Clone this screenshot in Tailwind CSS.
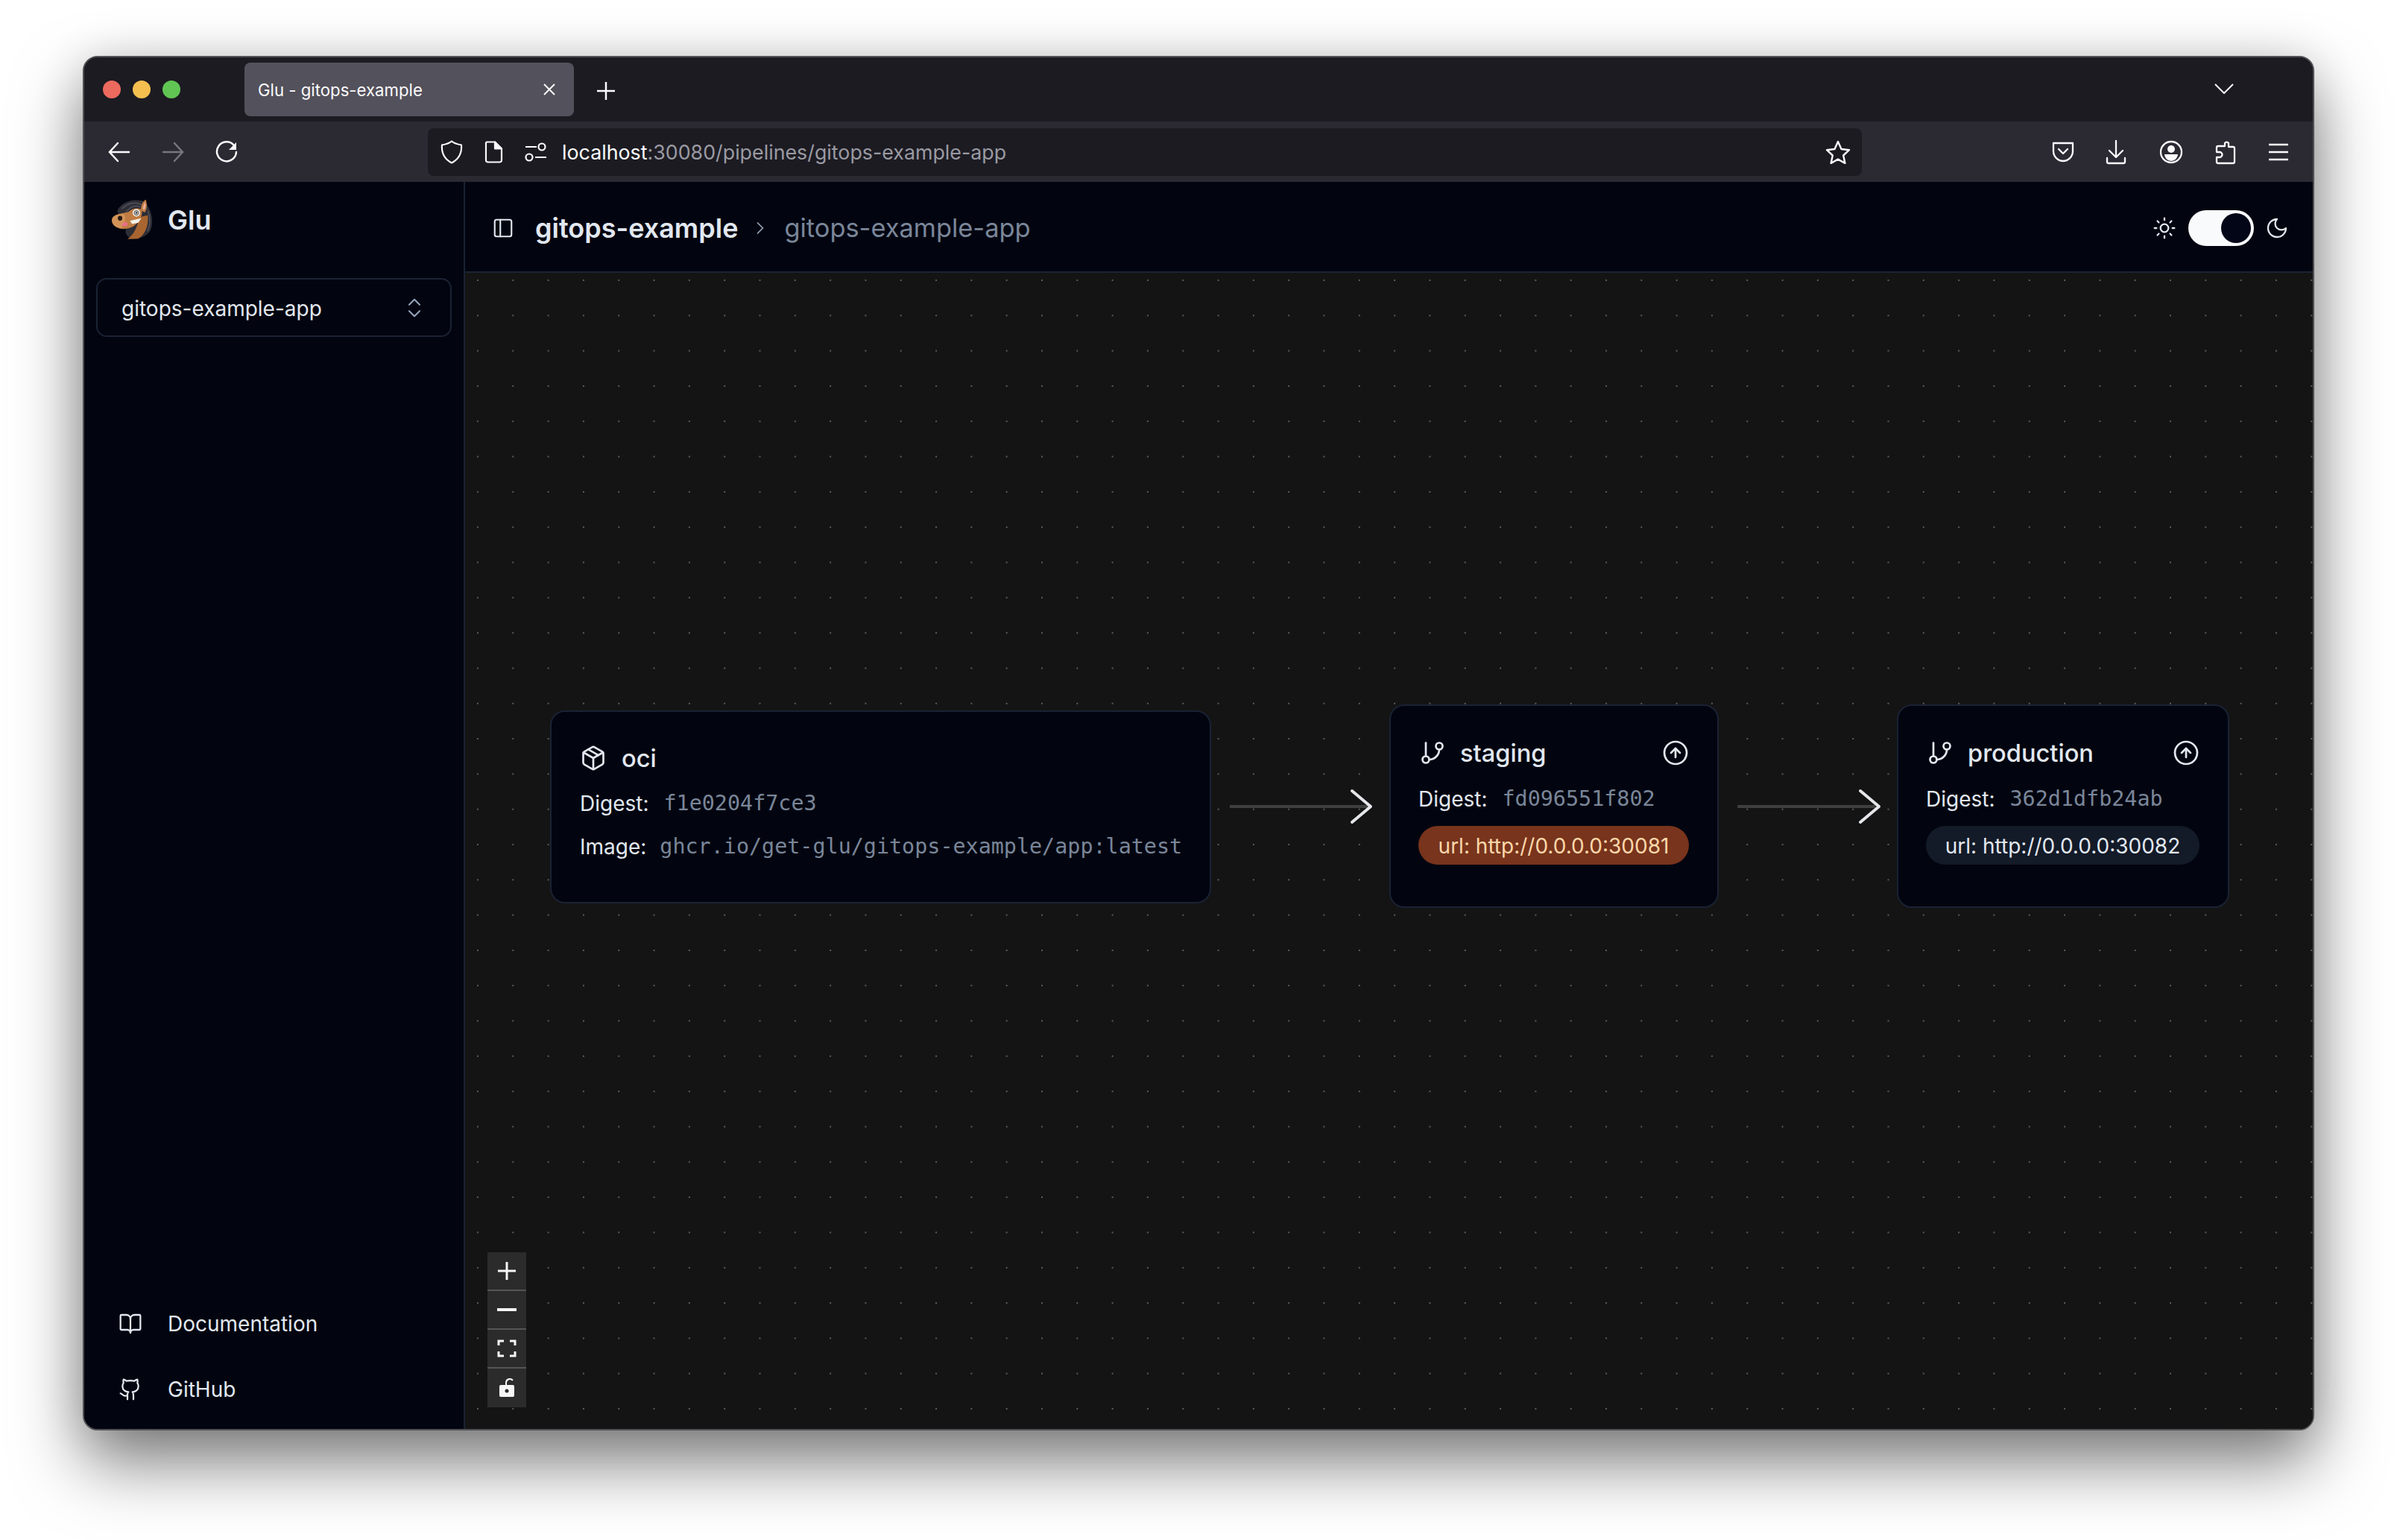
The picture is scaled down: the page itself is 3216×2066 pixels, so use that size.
<!DOCTYPE html>
<html lang="en">
<head>
    <meta charset="UTF-8">
    <title>Glu - gitops-example</title>
    <script src="https://cdn.jsdelivr.net/npm/@tailwindcss/browser@4"></script>
</head>
<body class="bg-white h-[2066px] w-[3216px] overflow-hidden pl-[111px] pt-[75px] font-['Inter',sans-serif]">
    <!-- Browser window -->
    <div class="w-[2994px] h-[1844px] flex flex-col border-2 border-[#505054] rounded-[20px] overflow-hidden bg-[#1c1b22] shadow-[0_44px_90px_rgba(0,0,0,0.5),0_0_60px_rgba(0,0,0,0.12)]">

        <!-- Tab strip -->
        <div class="h-[86px] shrink-0 flex items-start pl-[25px] bg-[#1c1b22]">
            <div class="flex gap-4 mt-[31px]">
                <span class="w-6 h-6 rounded-full bg-[#ec6a5e]"></span>
                <span class="w-6 h-6 rounded-full bg-[#f4bf4f]"></span>
                <span class="w-6 h-6 rounded-full bg-[#61c554]"></span>
            </div>
            <div class="ml-[86px] mt-[7px] w-[442px] h-[72px] rounded-lg bg-[#53515b] flex items-center pl-[18px] pr-[24px] justify-between">
                <span class="pt-[2px] text-[22.2px] text-[#fbfbfe]">Glu - gitops-example</span>
                <svg class="w-[18px] h-[18px]" viewBox="0 0 18 18" fill="none" stroke="#fbfbfe" stroke-width="2"><path d="M2 2l14 14M16 2L2 16"/></svg>
            </div>
            <svg class="ml-[30px] mt-[32px] w-[26px] h-[26px]" viewBox="0 0 26 26" fill="none" stroke="#fbfbfe" stroke-width="2.5"><path d="M13 1v24M1 13h24"/></svg>
            <svg class="ml-auto mr-[106px] mt-[35px] w-[26px] h-[14px]" viewBox="0 0 26 14" fill="none" stroke="#fbfbfe" stroke-width="2"><path d="M1 1l12 12L25 1"/></svg>
        </div>

        <!-- Toolbar -->
        <div class="h-[81px] shrink-0 flex items-center pl-[32px] bg-[#2b2a33] text-[#fbfbfe]">
            <svg class="w-[30px] h-[30px]" viewBox="0 0 30 30" fill="none" stroke="#fbfbfe" stroke-width="2.5" stroke-linecap="round"><path d="M28 15H2M13 3L2 15l11 12"/></svg>
            <svg class="ml-[42px] w-[30px] h-[30px]" viewBox="0 0 30 30" fill="none" stroke="#77767e" stroke-width="2.5" stroke-linecap="round"><path d="M2 15h26M17 3l11 12-11 12"/></svg>
            <svg class="ml-[42px] w-[30px] h-[30px]" viewBox="0 0 30 30" fill="none" stroke="#fbfbfe" stroke-width="2.5" stroke-linecap="round"><path d="M25 6A13 13 0 1 0 28 15"/><path d="M28 2v10H18z" fill="#fbfbfe" stroke="none"/></svg>

            <!-- Url bar -->
            <div class="ml-[255px] w-[1924px] h-16 rounded-lg bg-[#1c1b22] flex items-center pl-[17px] pr-[15px]">
                <svg class="w-[30px] h-[32px]" viewBox="0 0 30 32" fill="none" stroke="#fbfbfe" stroke-width="2.2" stroke-linejoin="round"><path d="M15 1.5c3 2.5 7 4 13 5 .8 10-3.5 19-13 24-9.5-5-13.800-14-13-24 6-1 10-2.500 13-5z"/></svg>
                <svg class="ml-[29px] w-[25px] h-[30px]" viewBox="0 0 25 30" fill="none" stroke="#fbfbfe" stroke-width="2.2" stroke-linejoin="round"><path d="M3 1.500h11l9 9V26a2.500 2.500 0 0 1-2.500 2.500h-16A2.500 2.500 0 0 1 2 26V2.500z"/><path d="M14 1.500l9 9h-9z" fill="#fbfbfe"/></svg>
                <svg class="ml-[29px] w-[30px] h-[26px]" viewBox="0 0 30 26" fill="none" stroke="#fbfbfe" stroke-width="2.2"><path d="M1 6h15M14 20h15"/><circle cx="23" cy="6" r="4.500"/><circle cx="6" cy="20" r="4.500"/></svg>
                <span class="ml-[20px] pt-[2px] text-[26.8px] text-[#fbfbfe]">localhost<span class="text-[#9a9aa2]">:30080/pipelines/gitops-example-app</span></span>
                <svg class="ml-auto w-[34px] h-[32px]" viewBox="0 0 34 32" fill="none" stroke="#fbfbfe" stroke-width="2.4" stroke-linejoin="round"><path d="M17 2l4.500 10 10.500 1.200-7.800 7.300 2.200 10.500L17 25.600 7.600 31l2.200-10.500L2 13.200 12.500 12z"/></svg>
            </div>

            <!-- Toolbar buttons -->
            <div class="ml-[255px] flex items-center">
                <svg class="w-[30px] h-[28px]" viewBox="0 0 30 28" fill="none" stroke="#fbfbfe" stroke-width="2.300" stroke-linejoin="round" stroke-linecap="round"><path d="M2 2h26v11c0 7-6 13-13 13S2 20 2 13z"/><path d="M9 10l6 6 6-6"/></svg>
                <svg class="ml-[42px] w-[28px] h-[34px]" viewBox="0 0 28 34" fill="none" stroke="#fbfbfe" stroke-width="2.300" stroke-linecap="round" stroke-linejoin="round"><path d="M14 2v21M5 15l9 9 9-9M2 25v5a2 2 0 0 0 2 2h20a2 2 0 0 0 2-2v-5"/></svg>
                <svg class="ml-[44px] w-[32px] h-[32px]" viewBox="0 0 32 32" fill="none" stroke="#fbfbfe" stroke-width="2.300"><circle cx="16" cy="16" r="14"/><circle cx="16" cy="12" r="5" fill="#fbfbfe" stroke="none"/><path d="M7 19h18a9 9 0 0 1-18 0z" fill="#fbfbfe" stroke="none"/></svg>
                <svg class="ml-[41px] w-[30px] h-[34px]" viewBox="0 0 30 34" fill="none" stroke="#fbfbfe" stroke-width="2.300" stroke-linejoin="round"><path d="M11 9h4V5a3 3 0 0 1 5 0v5h6a2 2 0 0 1 2 2v18a2 2 0 0 1-2 2H6a2 2 0 0 1-2-2v-6h4a3 3 0 0 0 0-7H4v-6a2 2 0 0 1 2-2z"/></svg>
                <svg class="ml-[43px] w-[28px] h-[24px]" viewBox="0 0 28 24" fill="none" stroke="#fbfbfe" stroke-width="2.600"><path d="M1 2h26M1 12h26M1 22h26"/></svg>
            </div>
        </div>

        <!-- App -->
        <div class="flex-1 flex min-h-0 bg-[#020510]">
            <!-- Sidebar -->
            <aside class="w-[511px] shrink-0 flex flex-col border-r-2 border-[#1a2234] px-[16px] text-[#e2e8f0]">
                <div class="h-[129px] flex items-start pl-[18px] pt-[21px]">
                    <svg class="w-[60px] h-[58px]" viewBox="50 40 180 175">
                        <!-- mane -->
                        <path d="M80 95C92 62 145 38 192 58C218 85 228 130 218 165C208 192 178 208 140 208C118 198 108 180 118 165Z" fill="#2e2e36"/>
                        <path d="M100 85C120 65 150 55 178 68M118 96C135 78 155 70 172 78M205 95C214 120 214 150 204 175" fill="none" stroke="#55555f" stroke-width="4" stroke-linecap="round"/>
                        <!-- neck -->
                        <path d="M122 208C150 190 165 150 170 120L204 112C208 150 196 190 165 207Z" fill="#a9652f"/>
                        <!-- head -->
                        <path d="M60 125C68 108 100 104 125 99C140 84 165 78 180 90C184 115 172 137 152 152C135 167 100 172 84 162C68 156 56 145 60 125Z" fill="#c07c42"/>
                        <path d="M60 125C68 108 92 106 108 108C118 125 110 150 96 165C88 165 84 162 84 162C68 156 56 145 60 125Z" fill="#d29358"/>
                        <!-- ear -->
                        <path d="M176 92C176 70 184 55 196 48C202 65 202 88 192 100Z" fill="#c07c42"/>
                        <path d="M184 86C185 72 189 64 194 58C197 70 195 82 190 90Z" fill="#eab09a"/>
                        <!-- eye -->
                        <circle cx="158" cy="102" r="15" fill="#f6f6f2"/>
                        <circle cx="158" cy="102" r="9" fill="none" stroke="#30302f" stroke-width="3"/>
                        <circle cx="158" cy="102" r="4.500" fill="#30302f"/>
                        <circle cx="156" cy="100" r="1.500" fill="#fff"/>
                        <ellipse cx="92" cy="124" rx="9" ry="10" fill="#2a1a14"/>
                        <!-- teeth and tongue -->
                        <path d="M132 134L178 124L166 142L141 147Z" fill="#f5f3ea"/>
                        <path d="M98 149C108 136 126 139 123 150C115 160 104 157 98 149Z" fill="#e8708a"/>
                    </svg>
                    <span class="ml-[18px] mt-[8px] text-[36px] font-semibold leading-[44px]">Glu</span>
                </div>
                <div class="h-[79px] rounded-[14px] border-2 border-[#1a2234] flex items-center justify-between pl-[32px] pr-[36px] text-[28px]">
                    <span class="pt-[2px]">gitops-example-app</span>
                    <svg class="w-[24px] h-[28px] text-[#94a3b8]" viewBox="4 2 16 20" fill="none" stroke="currentColor" stroke-width="1.500" stroke-linecap="round" stroke-linejoin="round"><path d="m7 15 5 5 5-5"/><path d="m7 9 5-5 5 5"/></svg>
                </div>
                <div class="mt-auto pb-[33px] pl-[30px] text-[28px]">
                    <a href="#" class="h-[40px] flex items-center gap-[34px]">
                        <svg class="w-[32px] h-[32px]" viewBox="0 0 24 24" fill="none" stroke="currentColor" stroke-width="1.700" stroke-linecap="round" stroke-linejoin="round"><path d="M12 7v14"/><path d="M3 18a1 1 0 0 1-1-1V4a1 1 0 0 1 1-1h5a4 4 0 0 1 4 4 4 4 0 0 1 4-4h5a1 1 0 0 1 1 1v13a1 1 0 0 1-1 1h-6a3 3 0 0 0-3 3 3 3 0 0 0-3-3z"/></svg>
                        <span>Documentation</span>
                    </a>
                    <a href="#" class="mt-[48px] h-[40px] flex items-center gap-[34px]">
                        <svg class="w-[32px] h-[32px]" viewBox="0 0 24 24" fill="none" stroke="currentColor" stroke-width="1.700" stroke-linecap="round" stroke-linejoin="round"><path d="M15 22v-4a4.800 4.800 0 0 0-1-3.500c3 0 6-2 6-5.500.08-1.250-.27-2.480-1-3.500.28-1.150.28-2.350 0-3.500 0 0-1 0-3 1.500-2.640-.5-5.360-.5-8 0C6 2 5 2 5 2c-.3 1.150-.3 2.350 0 3.500A5.403 5.403 0 0 0 4 9c0 3.500 3 5.500 6 5.500-.39.49-.68 1.050-.85 1.650-.17.6-.22 1.230-.15 1.850v4"/><path d="M9 18c-4.510 2-5-2-7-2"/></svg>
                        <span>GitHub</span>
                    </a>
                </div>
            </aside>

            <main class="flex-1 flex flex-col min-w-0">
                <!-- Header -->
                <header class="h-[122px] shrink-0 flex items-center border-b-2 border-[#1a2234] pl-[36px] pr-[32px] pt-[3px]">
                    <svg class="w-[30px] h-[30px] text-[#e2e8f0]" viewBox="0 0 24 24" fill="none" stroke="currentColor" stroke-width="1.700" stroke-linecap="round" stroke-linejoin="round"><rect x="3" y="3" width="18" height="18" rx="2"/><path d="M9 3v18"/></svg>
                    <span class="ml-[28px] text-[36px] font-semibold text-[#e2e8f0]">gitops-example</span>
                    <svg class="ml-[16px] w-[28px] h-[28px] text-[#94a3b8]" viewBox="0 0 24 24" fill="none" stroke="currentColor" stroke-width="1.500" stroke-linecap="round" stroke-linejoin="round"><path d="m9 18 6-6-6-6"/></svg>
                    <span class="ml-[18px] text-[34.4px] text-[#7a8699]">gitops-example-app</span>
                    <svg class="ml-auto w-[32px] h-[32px] text-[#e2e8f0]" viewBox="0 0 24 24" fill="none" stroke="currentColor" stroke-width="1.700" stroke-linecap="round" stroke-linejoin="round"><circle cx="12" cy="12" r="4"/><path d="M12 2v2M12 20v2m-7.070-17.070 1.410 1.410m11.320 11.320 1.410 1.410M2 12h2M20 12h2M6.340 17.660l-1.410 1.410M19.070 4.930l-1.410 1.410"/></svg>
                    <div class="ml-[16px] w-[88px] h-[48px] rounded-full bg-[#f8fafc] flex items-center justify-end pr-[4px]">
                        <span class="w-[40px] h-[40px] rounded-full bg-[#020617]"></span>
                    </div>
                    <svg class="ml-[15px] w-[32px] h-[32px] text-[#e2e8f0]" viewBox="0 0 24 24" fill="none" stroke="currentColor" stroke-width="1.700" stroke-linecap="round" stroke-linejoin="round"><path d="M12 3a6 6 0 0 0 9 9 9 9 0 1 1-9-9Z"/></svg>
                </header>

                <!-- Pipeline canvas -->
                <div class="relative flex-1 bg-[#141414] bg-[radial-gradient(#5c5c5c_1.1px,transparent_1.5px)] bg-size-[47.32px_47.32px] bg-position-[-6.660px_-13.660px]">

                    <!-- Edges -->
                    <svg class="absolute left-0 top-0 w-full h-full" fill="none">
                        <path d="M1026 716H1212" stroke="#3f3f3f" stroke-width="4"/>
                        <path d="M1707 716H1892" stroke="#3f3f3f" stroke-width="4"/>
                        <path d="M1190 695L1215 716L1190 737" stroke="#e5e7eb" stroke-width="4" stroke-linecap="round" stroke-linejoin="round"/>
                        <path d="M1872 695L1897 716L1872 737" stroke="#e5e7eb" stroke-width="4" stroke-linecap="round" stroke-linejoin="round"/>
                    </svg>

                    <!-- oci node -->
                    <div class="absolute left-[114px] top-[587px] w-[887px] h-[259px] rounded-[20px] border-2 border-[#1a2234] bg-[#020510] pt-[44px] pl-[38px] text-[#e2e8f0]">
                        <div class="flex items-center h-[36px]">
                            <svg class="w-[36px] h-[36px]" viewBox="0 0 24 24" fill="none" stroke="currentColor" stroke-width="1.800" stroke-linecap="round" stroke-linejoin="round"><path d="m7.500 4.270 9 5.150"/><path d="M21 8a2 2 0 0 0-1-1.730l-7-4a2 2 0 0 0-2 0l-7 4A2 2 0 0 0 3 8v8a2 2 0 0 0 1 1.730l7 4a2 2 0 0 0 2 0l7-4A2 2 0 0 0 21 16Z"/><path d="m3.300 7 8.700 5 8.700-5"/><path d="M12 22V12"/></svg>
                            <span class="ml-[20px] text-[32.6px] font-medium">oci</span>
                        </div>
                        <div class="mt-[23px] h-[40px] flex items-center text-[28px]">
                            <span>Digest:</span>
                            <span class="ml-[20px] font-['DejaVu_Sans_Mono',monospace] text-[28.4px] text-[#7a8699]">f1e0204f7ce3</span>
                        </div>
                        <div class="mt-[18px] h-[40px] flex items-center text-[28px]">
                            <span>Image:</span>
                            <span class="ml-[18px] font-['DejaVu_Sans_Mono',monospace] text-[28.4px] text-[#7a8699] whitespace-nowrap">ghcr.io/get-glu/gitops-example/app:latest</span>
                        </div>
                    </div>

                    <!-- staging node -->
                    <div class="absolute left-[1240px] top-[579px] w-[442px] h-[273px] rounded-[20px] border-2 border-[#1a2234] bg-[#020510] pt-[45px] pl-[37px] pr-[38px] text-[#e2e8f0]">
                        <div class="flex items-center h-[36px]">
                            <svg class="w-[36px] h-[36px] translate-x-[1px]" viewBox="0 0 24 24" fill="none" stroke="currentColor" stroke-width="1.800" stroke-linecap="round" stroke-linejoin="round"><line x1="6" x2="6" y1="3" y2="15"/><circle cx="18" cy="6" r="3"/><circle cx="6" cy="18" r="3"/><path d="M18 9a9 9 0 0 1-9 9"/></svg>
                            <span class="ml-[20px] text-[32.6px] font-medium">staging</span>
                            <svg class="ml-auto w-[36px] h-[36px]" viewBox="0 0 24 24" fill="none" stroke="currentColor" stroke-width="1.800" stroke-linecap="round" stroke-linejoin="round"><circle cx="12" cy="12" r="10"/><path d="m16 12-4-4-4 4"/><path d="M12 16V8"/></svg>
                        </div>
                        <div class="mt-[24px] h-[40px] flex items-center text-[28px]">
                            <span>Digest:</span>
                            <span class="ml-[20px] font-['DejaVu_Sans_Mono',monospace] text-[28.4px] text-[#7a8699]">fd096551f802</span>
                        </div>
                        <div class="mt-[16px] h-[52px] rounded-full bg-[#78341c] flex items-center justify-center pt-[2px] text-[28px] text-[#fed7aa]">url: http://0.0.0.0:30081</div>
                    </div>

                    <!-- production node -->
                    <div class="absolute left-[1921px] top-[579px] w-[446px] h-[273px] rounded-[20px] border-2 border-[#1a2234] bg-[#020510] pt-[45px] pl-[37px] pr-[38px] text-[#e2e8f0]">
                        <div class="flex items-center h-[36px]">
                            <svg class="w-[36px] h-[36px] translate-x-[1px]" viewBox="0 0 24 24" fill="none" stroke="currentColor" stroke-width="1.800" stroke-linecap="round" stroke-linejoin="round"><line x1="6" x2="6" y1="3" y2="15"/><circle cx="18" cy="6" r="3"/><circle cx="6" cy="18" r="3"/><path d="M18 9a9 9 0 0 1-9 9"/></svg>
                            <span class="ml-[20px] text-[32.6px] font-medium">production</span>
                            <svg class="ml-auto w-[36px] h-[36px]" viewBox="0 0 24 24" fill="none" stroke="currentColor" stroke-width="1.800" stroke-linecap="round" stroke-linejoin="round"><circle cx="12" cy="12" r="10"/><path d="m16 12-4-4-4 4"/><path d="M12 16V8"/></svg>
                        </div>
                        <div class="mt-[24px] h-[40px] flex items-center text-[28px]">
                            <span>Digest:</span>
                            <span class="ml-[20px] font-['DejaVu_Sans_Mono',monospace] text-[28.4px] text-[#7a8699]">362d1dfb24ab</span>
                        </div>
                        <div class="mt-[16px] h-[52px] rounded-full bg-[#131a28] flex items-center justify-center pt-[2px] text-[28px]">url: http://0.0.0.0:30082</div>
                    </div>

                    <!-- Zoom controls -->
                    <div class="absolute left-[30px] bottom-[29px] w-[52px] flex flex-col bg-[#2b2b2b] divide-y-2 divide-[#555555] text-[#f5f5f5]">
                        <button class="h-[52px] flex items-center justify-center"><svg class="w-[26px] h-[26px]" viewBox="0 0 26 26" fill="none" stroke="currentColor" stroke-width="3"><path d="M13 1v24M1 13h24"/></svg></button>
                        <button class="h-[52px] flex items-center justify-center"><svg class="w-[26px] h-[4px]" viewBox="0 0 26 4" fill="currentColor"><rect width="26" height="4"/></svg></button>
                        <button class="h-[52px] flex items-center justify-center"><svg class="w-[26px] h-[24px]" viewBox="0 0 26 24" fill="none" stroke="currentColor" stroke-width="3"><path d="M2 8V2h7M17 2h7v6M24 16v6h-7M9 22H2v-6"/></svg></button>
                        <button class="h-[52px] flex items-center justify-center"><svg class="w-[22px] h-[26px]" viewBox="0 0 22 26"><path d="M10 9V6a5 5 0 0 1 9-3" fill="none" stroke="currentColor" stroke-width="2"/><path d="M3 9h16a2 2 0 0 1 2 2v12a2 2 0 0 1-2 2H3a2 2 0 0 1-2-2V11a2 2 0 0 1 2-2z" fill="currentColor"/><circle cx="11" cy="17" r="2.500" fill="#2b2b2b"/></svg></button>
                    </div>
                </div>
            </main>
        </div>
    </div>
</body>
</html>
